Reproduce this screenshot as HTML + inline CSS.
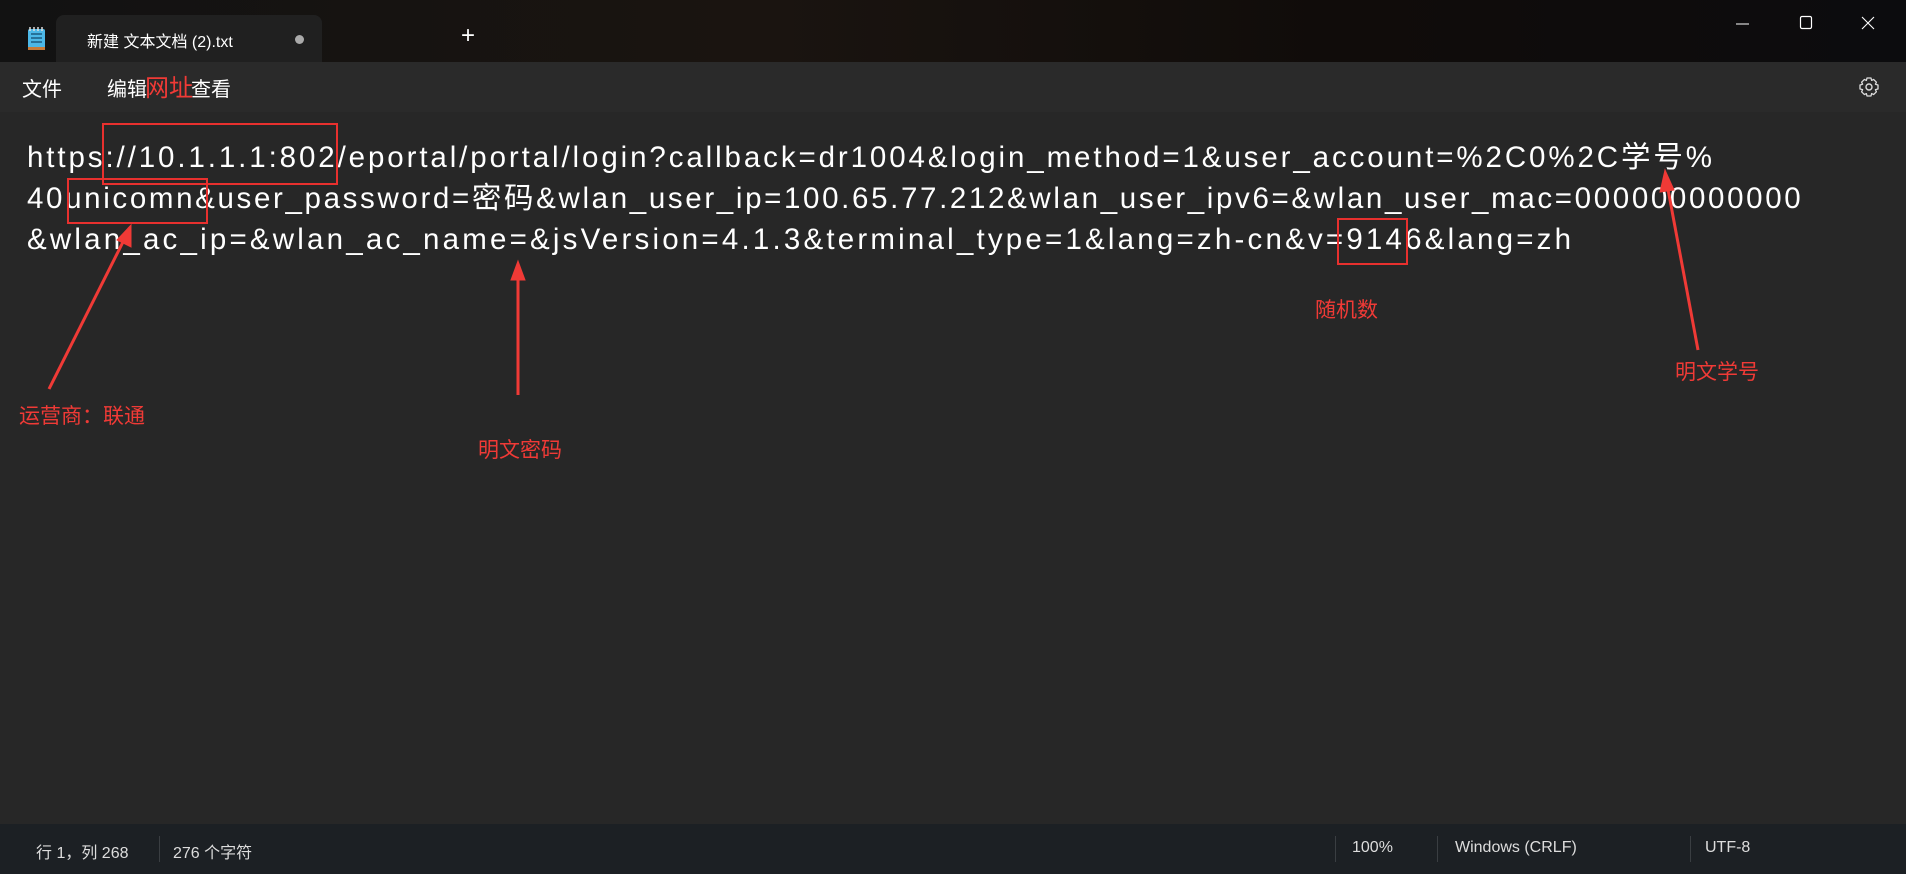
<!DOCTYPE html>
<html><head><meta charset="utf-8"><style>
*{margin:0;padding:0;box-sizing:border-box}
body{width:1906px;height:874px;background:#272727;position:relative;overflow:hidden;font-family:"Segoe UI","Liberation Sans","Noto Sans CJK SC",sans-serif;color:#fff}
.title{position:absolute;left:0;top:0;width:1906px;height:62px;background:linear-gradient(90deg,#121212,#1a1410 40%,#100c0a 70%,#0c0c0e)}
.tab{position:absolute;left:56px;top:15px;width:266px;height:47px;background:#202020;border-radius:8px 8px 0 0}
.menu{position:absolute;left:0;top:62px;width:1906px;height:50px;background:#2a2a2a}
.abs{position:absolute;white-space:nowrap}
.editor{position:absolute;left:27px;top:137px;font-size:29.5px;line-height:41px;color:#fff;white-space:pre}
.editor div{height:41px}
.status{position:absolute;left:0;top:824px;width:1906px;height:50px;background:#1c2024;font-size:16px;color:#ddd}
.sep{position:absolute;top:12px;width:1px;height:26px;background:#3a3e42}
.box{position:absolute;border:2px solid #e8302e}
.red{color:#f03a36;font-size:21px;font-family:"Liberation Sans","Noto Sans CJK SC",sans-serif}
</style></head><body>
<div class="title">
 <div class="tab"></div>
 <svg class="abs" style="left:27px;top:26px" width="20" height="26" viewBox="0 0 20 26"><rect x="1" y="3" width="17" height="21" rx="2" fill="#4cb8e8"/><rect x="1" y="21" width="17" height="3" fill="#c77b3a"/><path d="M4 8h11M4 12h11M4 16h11" stroke="#1b5a80" stroke-width="1.5"/><path d="M3 1v4M7 1v4M11 1v4M15 1v4" stroke="#ddd" stroke-width="1.5"/></svg>
 <div class="abs" style="left:87px;top:28px;font-size:16px;color:#fff">新建 文本文档 (2).txt</div>
 <div class="abs" style="left:295px;top:35px;width:9px;height:9px;border-radius:50%;background:#aaa"></div>
 <div class="abs" style="left:461px;top:22px;font-size:24px;font-weight:300;color:#fff">+</div>
 <svg class="abs" style="left:1726px;top:14px" width="180" height="20"><path d="M10 10h13" stroke="#fff" stroke-width="1"/><rect x="74.5" y="2.5" width="11" height="12" rx="1.5" fill="none" stroke="#fff" stroke-width="1.2"/><path d="M136 3l12 12M148 3l-12 12" stroke="#fff" stroke-width="1.1"/></svg>
</div>
<div class="menu">
 <div class="abs" style="left:22px;top:11px;font-size:20px">文件</div>
 <div class="abs" style="left:107px;top:11px;font-size:20px">编辑</div>
 <div class="abs" style="left:191px;top:11px;font-size:20px">查看</div>
 <div class="abs red" style="left:145px;top:6px;font-size:24px">网址</div>
 <svg class="abs" style="left:1857px;top:13px" width="24" height="24" viewBox="0 0 24 24"><circle cx="12" cy="12" r="3" fill="none" stroke="#ddd" stroke-width="1.4"/><path d="M10 3h4l.6 2.4 2-1 2.8 2.8-1 2 2.6.8v4l-2.6.6 1 2.2-2.8 2.8-2-1-.6 2.4h-4l-.6-2.4-2 1-2.8-2.8 1-2.2L3 14v-4l2.6-.8-1-2 2.8-2.8 2 1z" fill="none" stroke="#ddd" stroke-width="1.3" stroke-linejoin="round"/></svg>
</div>
<div class="editor"><div style="letter-spacing:2.9px">https://10.1.1.1:802/eportal/portal/login?callback=dr1004&amp;login_method=1&amp;user_account=%2C0%2C学号%</div><div style="letter-spacing:2.65px">40unicomn&amp;user_password=密码&amp;wlan_user_ip=100.65.77.212&amp;wlan_user_ipv6=&amp;wlan_user_mac=000000000000</div><div style="letter-spacing:3.2px">&amp;wlan_ac_ip=&amp;wlan_ac_name=&amp;jsVersion=4.1.3&amp;terminal_type=1&amp;lang=zh-cn&amp;v=9146&amp;lang=zh</div></div>
<div class="box" style="left:102px;top:123px;width:236px;height:62px"></div>
<div class="box" style="left:67px;top:178px;width:141px;height:46px"></div>
<div class="box" style="left:1337px;top:218px;width:71px;height:47px"></div>
<svg class="abs" style="left:0;top:0" width="1906" height="874">
 <g fill="#f03a36" stroke="#f03a36" stroke-width="3">
  <line x1="49" y1="389" x2="126" y2="236"/><polygon points="131,225 131,247 117,240" stroke-width="1"/>
  <line x1="518" y1="395" x2="518" y2="275"/><polygon points="518,261 525,280 511,280" stroke-width="1"/>
  <line x1="1698" y1="350" x2="1667" y2="184"/><polygon points="1665,170 1674,190 1660,192" stroke-width="1"/>
 </g>
</svg>
<div class="abs red" style="left:1315px;top:294px">随机数</div>
<div class="abs red" style="left:1675px;top:356px">明文学号</div>
<div class="abs red" style="left:19px;top:400px">运营商：联通</div>
<div class="abs red" style="left:478px;top:434px">明文密码</div>
<div class="status">
 <div class="abs" style="left:36px;top:15px">行 1，列 268</div>
 <div class="sep" style="left:159px"></div>
 <div class="abs" style="left:173px;top:15px">276 个字符</div>
 <div class="sep" style="left:1335px"></div>
 <div class="abs" style="left:1352px;top:15px">100%</div>
 <div class="sep" style="left:1437px"></div>
 <div class="abs" style="left:1455px;top:15px">Windows (CRLF)</div>
 <div class="sep" style="left:1690px"></div>
 <div class="abs" style="left:1705px;top:15px">UTF-8</div>
</div>
</body></html>
